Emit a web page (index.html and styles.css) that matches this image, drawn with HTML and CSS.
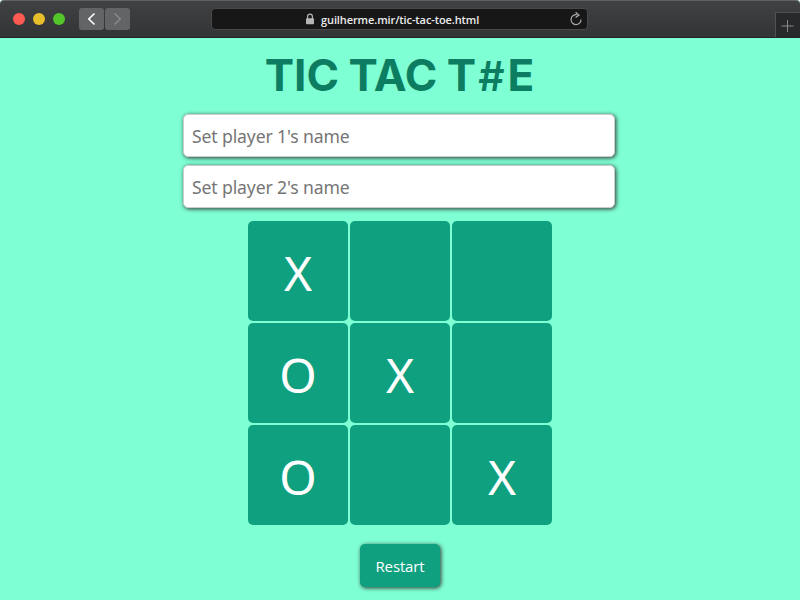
FILE: index.html
```html
<!DOCTYPE html>
<html lang="en">
<head>
<meta charset="utf-8">
<title>Tic Tac Toe</title>
<link rel="stylesheet" href="styles.css">
</head>
<body>
<header class="browser">
  <div class="lights"><i class="red"></i><i class="yellow"></i><i class="green"></i></div>
  <div class="nav">
    <span><svg width="25" height="22" viewBox="0 0 25 22"><path d="M15.5 5.5 9.8 11l5.7 5.5" stroke="#fff" stroke-width="1.6" fill="none"/></svg></span>
    <span><svg width="25" height="22" viewBox="0 0 25 22"><path d="M9.5 5.5 15.2 11l-5.7 5.5" stroke="#8b8c8e" stroke-width="1.4" fill="none"/></svg></span>
  </div>
  <div class="address">
    <svg class="lock" width="10" height="12" viewBox="0 0 10 12"><path d="M2.6 6V3.6a2.4 2.4 0 0 1 4.8 0V6" stroke="#b4b5b7" stroke-width="1.2" fill="none"/><rect x="1" y="5.2" width="8" height="6" rx=".7" fill="#b4b5b7"/></svg>
    <span class="url">guilherme.mir/tic-tac-toe.html</span>
    <svg class="reload" width="14" height="16" viewBox="0 0 14 16"><path d="M7.8 3.7a5 5 0 1 0 4.2 4.8" stroke="#aaabac" stroke-width="1.2" fill="none"/><path d="M6.6 1.2 10 4.1 6.6 6.4" stroke="#aaabac" stroke-width="1.2" fill="none"/></svg>
  </div>
  <div class="newtab"><svg width="24" height="25" viewBox="0 0 24 25"><path d="M11.5 7v12M5.5 13h12" stroke="#88898b" stroke-width="1" fill="none"/></svg></div>
</header>
<main>
  <h1>TIC TAC T<span class="hash">#</span>E</h1>
  <form class="players">
    <input type="text" placeholder="Set player 1's name">
    <input type="text" placeholder="Set player 2's name">
  </form>
  <div class="board">
    <div class="cell">X</div><div class="cell"></div><div class="cell"></div>
    <div class="cell">O</div><div class="cell">X</div><div class="cell"></div>
    <div class="cell">O</div><div class="cell"></div><div class="cell">X</div>
  </div>
  <button class="restart" type="button">Restart</button>
</main>
</body>
</html>
```
FILE: styles.css
```css
* { box-sizing: border-box; }
html { background: #fff; }
body {
  margin: 0;
  height: 600px;
  overflow: hidden;
  background: #7fffd4;
  font-family: "Open Sans", "Noto Sans", sans-serif;
}
svg { display: block; }
.browser {
  display: flex;
  height: 38px;
  background: linear-gradient(#404143, #333436);
  border-top: 1px solid #606163;
  border-bottom: 1px solid #242526;
  border-radius: 4px 4px 0 0;
  box-shadow: 0 -6px 0 2px #fff;
}
.lights { display: flex; gap: 8px; padding: 12px 0 0 13px; }
.lights i { width: 12px; height: 12px; border-radius: 50%; }
.red { background: #ff5b52; }
.yellow { background: #e7bf2a; }
.green { background: #54c42b; }
.nav { display: flex; gap: 1px; margin: 7px 0 0 14px; }
.nav span { width: 25px; height: 22px; border-radius: 3px; background: #636466; }
.address {
  display: flex;
  align-items: center;
  width: 377px;
  height: 22px;
  margin: 7px 0 0 81px;
  padding: 0 4px 0 93px;
  background: #171717;
  border: 1px solid #48494b;
  border-radius: 4px;
}
.url { margin: 1px 0 0 6px; color: #ececec; font-size: 11px; font-weight: 600; line-height: 20px; white-space: nowrap; letter-spacing: -.1px; }
.reload { margin-left: auto; }
.newtab { width: 25px; height: 25px; margin: 11px 0 0 auto; background: #28292b; border: solid #515254; border-width: 1px 0 0 1px; }
main { display: flex; flex-direction: column; align-items: center; }
h1 {
  margin: 7px 1px 0 0;
  height: 61px;
  color: #0d7d62;
  font: 700 44px/60px Inter, sans-serif;
  word-spacing: -1px;
  white-space: nowrap;
}
.hash { margin: 0 3px 0 2px; font-size: 41px; font-weight: 600; }
.players { display: flex; flex-direction: column; gap: 8px; width: 432px; margin: 8px 2px 0 0; }
.players input {
  width: 100%;
  height: 43px;
  padding: 1px 8px;
  border: 1px solid #ccc;
  border-radius: 5px;
  background: #fff;
  box-shadow: 1px 1px 4px #333;
  font: 17.6px "Noto Sans", sans-serif;
  letter-spacing: -.13px;
}
.players input::placeholder { color: #757575; }
.board { display: grid; grid-template-columns: repeat(3, 100px); grid-auto-rows: 100px; gap: 2px; margin-top: 13px; }
.cell { padding-top: 4px; border-radius: 5px; background: #0fa17f; color: #fff; font-family: "Noto Sans", sans-serif; font-size: 48px; line-height: 95px; text-align: center; }
.restart {
  width: 80px;
  height: 43px;
  margin-top: 19px;
  padding: 0;
  border: 0;
  border-radius: 5px;
  background: #0fa17f;
  color: #fff;
  box-shadow: 1px 1px 4px #333;
  font: 15px "Open Sans", sans-serif;
  letter-spacing: -.15px;
}
```
